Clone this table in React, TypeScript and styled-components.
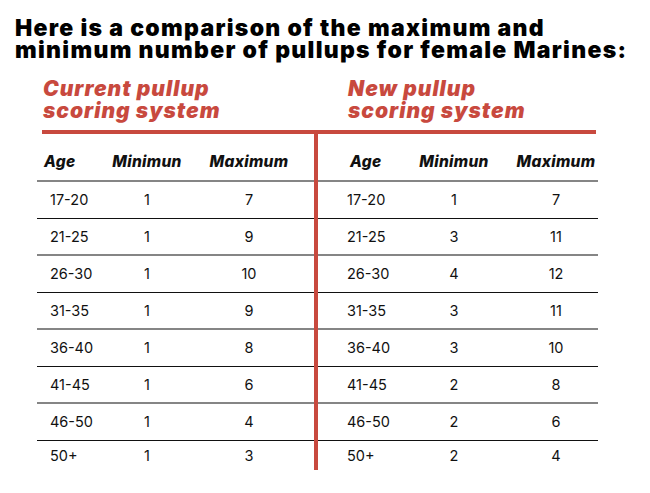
import React from "react";
import styled, { createGlobalStyle } from "styled-components";

const Global = createGlobalStyle`
  html, body { margin: 0; padding: 0; background: #ffffff; }
  body { font-family: "Inter", "Liberation Sans", sans-serif; color: #111; }
`;

const RED = "#c8493e";

const Page = styled.div`
  width: 650px;
  height: 493px;
  padding-top: 17px;
  box-sizing: border-box;
  background: #fff;
`;

const Title = styled.h1`
  margin: 0 0 0 15px;
  font-family: "Inter", "Liberation Sans", sans-serif;
  font-weight: 900;
  font-size: 23px;
  line-height: 22px;
  letter-spacing: 1.3px;
  color: #000;
  white-space: nowrap;
`;

const Board = styled.div`
  margin: 17px 0 0 37px;
  width: 561px;
`;

const Headings = styled.div`
  display: flex;
`;

const Heading = styled.h2<{ $w: number; $pad: number }>`
  margin: 0;
  width: ${(p) => p.$w}px;
  padding-left: ${(p) => p.$pad}px;
  box-sizing: border-box;
  font-family: "Inter", "Liberation Sans", sans-serif;
  font-weight: 900;
  font-style: italic;
  font-size: 21px;
  line-height: 22px;
  letter-spacing: 1px;
  color: ${RED};
  white-space: nowrap;
`;

const Rule = styled.div`
  height: 4px;
  margin: 8px 2px 0 5px;
  background: ${RED};
`;

const Body = styled.div`
  display: flex;
  align-items: stretch;
`;

const Divider = styled.div`
  width: 4px;
  background: ${RED};
  flex: none;
`;

const Table = styled.div<{ $w: number }>`
  width: ${(p) => p.$w}px;
  display: flex;
  flex-direction: column;
`;

type Line = "gray" | "black" | "none";

const Row = styled.div<{ $cols: string; $line: Line; $h: number; $head?: boolean }>`
  display: grid;
  grid-template-columns: ${(p) => p.$cols};
  height: ${(p) => p.$h}px;
  box-sizing: border-box;
  align-items: ${(p) => (p.$head ? "end" : "center")};
  padding-bottom: ${(p) => (p.$head ? 9 : 0)}px;
  border-bottom: ${(p) =>
    p.$line === "gray" ? "2px solid #858585" : p.$line === "black" ? "1px solid #111" : "none"};
`;

const Cell = styled.div<{ $head?: boolean; $left?: number }>`
  font-family: "Inter", "Liberation Sans", sans-serif;
  font-size: ${(p) => (p.$head ? 15.5 : 14.5)}px;
  line-height: 18px;
  font-weight: ${(p) => (p.$head ? 800 : 400)};
  font-style: ${(p) => (p.$head ? "italic" : "normal")};
  letter-spacing: ${(p) => (p.$head ? "0.3px" : "0")};
  color: #111;
  text-align: ${(p) => (p.$left !== undefined ? "left" : "center")};
  padding-left: ${(p) => p.$left ?? 0}px;
  white-space: nowrap;
`;

type Data = [string, string, string][];

const current: Data = [
  ["17-20", "1", "7"],
  ["21-25", "1", "9"],
  ["26-30", "1", "10"],
  ["31-35", "1", "9"],
  ["36-40", "1", "8"],
  ["41-45", "1", "6"],
  ["46-50", "1", "4"],
  ["50+", "1", "3"],
];

const next: Data = [
  ["17-20", "1", "7"],
  ["21-25", "3", "11"],
  ["26-30", "4", "12"],
  ["31-35", "3", "11"],
  ["36-40", "3", "10"],
  ["41-45", "2", "8"],
  ["46-50", "2", "6"],
  ["50+", "2", "4"],
];

function ScoreTable({
  rows,
  width,
  cols,
  headPad,
  dataPad,
}: {
  rows: Data;
  width: number;
  cols: string;
  headPad: number;
  dataPad: number;
}) {
  return (
    <Table $w={width}>
      <Row $cols={cols} $line="gray" $h={48} $head>
        <Cell $head $left={headPad}>Age</Cell>
        <Cell $head>Minimun</Cell>
        <Cell $head>Maximum</Cell>
      </Row>
      {rows.map((r, i) => {
        const last = i === rows.length - 1;
        const line: Line = last ? "none" : i % 2 === 0 ? "black" : "gray";
        return (
          <Row key={r[0]} $cols={cols} $line={line} $h={last ? 29 : 37}>
            <Cell $left={dataPad}>{r[0]}</Cell>
            <Cell>{r[1]}</Cell>
            <Cell>{r[2]}</Cell>
          </Row>
        );
      })}
    </Table>
  );
}

export default function App() {
  return (
    <>
      <Global />
      <Page>
        <Title>
          Here is a comparison of the maximum and
          <br />
          minimum number of pullups for female Marines:
        </Title>
        <Board>
          <Headings>
            <Heading $w={281} $pad={6}>
              Current pullup
              <br />
              scoring system
            </Heading>
            <Heading $w={280} $pad={30}>
              New pullup
              <br />
              scoring system
            </Heading>
          </Headings>
          <Rule />
          <Body>
            <ScoreTable rows={current} width={277} cols="73px 74px 130px" headPad={7} dataPad={13} />
            <Divider />
            <ScoreTable rows={next} width={280} cols="76px 120px 84px" headPad={32} dataPad={29} />
          </Body>
        </Board>
      </Page>
    </>
  );
}
